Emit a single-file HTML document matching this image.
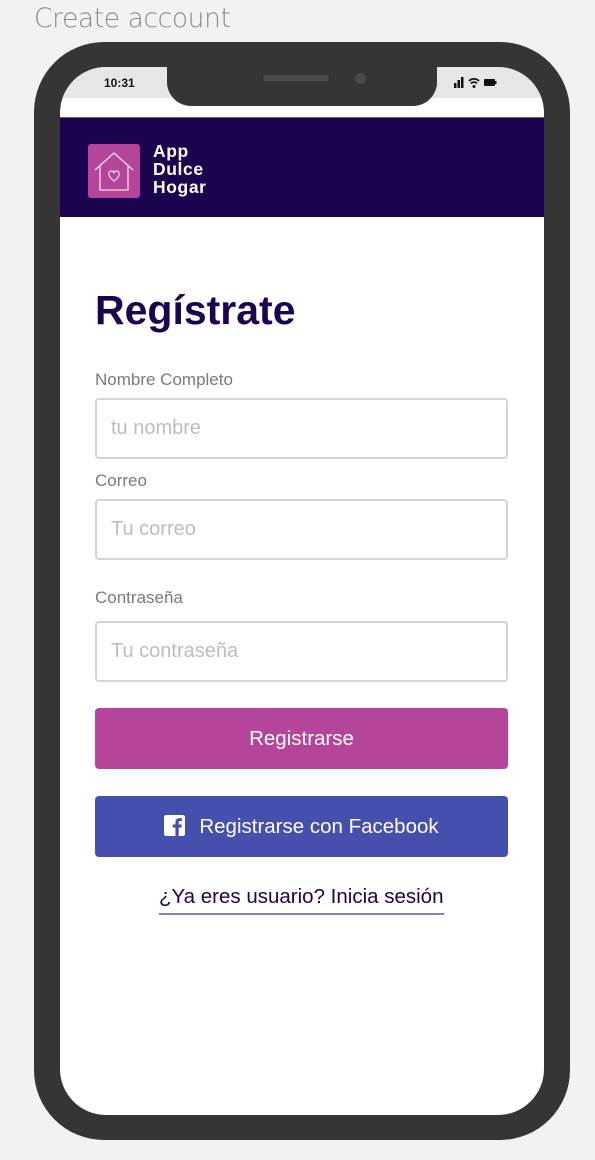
<!DOCTYPE html>
<html><head><meta charset="utf-8"><style>
*{margin:0;padding:0;box-sizing:border-box}
body{width:595px;height:1160px;background:#f2f2f2;position:relative;overflow:hidden;font-family:"Liberation Sans",Arial,sans-serif}
.t{position:absolute;left:34px;top:3px;font-size:26.5px;color:#8a8a8a;font-family:"DejaVu Sans","Liberation Sans",sans-serif;font-weight:300;letter-spacing:-0.4px}
.phone{position:absolute;left:34px;top:42px;width:536px;height:1098px;background:#353535;border-radius:70px}
.screen{position:absolute;left:60px;top:67px;width:484px;height:1048px;background:#fff;border-radius:46px;overflow:hidden}
.status{position:absolute;left:0;top:0;width:484px;height:31px;background:#e6e6e6}
.notch{position:absolute;left:107px;top:0;width:270px;height:39px;background:#353535;border-radius:0 0 24px 24px}
.spk{position:absolute;left:96px;top:8px;width:66px;height:6px;border-radius:3px;background:#4a4a4a}
.cam{position:absolute;left:188px;top:6px;width:11px;height:11px;border-radius:50%;background:#4a4a4a}
.time{position:absolute;left:44px;top:9px;font-size:12px;font-weight:bold;color:#111}
.hdr{position:absolute;left:0;top:50px;width:484px;height:100px;background:#1c034f;border-top:1px solid #6a5a8a}
.logo{position:absolute;left:28px;top:26px;width:52px;height:54px;background:#b5449b;border-radius:3px}
.lt{position:absolute;left:93px;top:24px;color:#fff;font-weight:bold;font-size:17.5px;line-height:18px;letter-spacing:0.6px}
h1{position:absolute;left:35px;top:220px;font-size:41px;color:#1c034f;font-weight:bold}
.lab{position:absolute;left:35px;font-size:17px;color:#7a7a7a}
.in{position:absolute;left:35px;width:413px;height:61px;border:2px solid #d3d3d3;border-radius:4px;font-size:20px;color:#bdbdbd;padding:17px 0 0 14px}
.btn{position:absolute;left:35px;width:413px;height:61px;border-radius:4px;color:#fff;font-size:20.5px;text-align:center;line-height:61px}
.link{position:absolute;left:99px;top:818px;font-size:20.5px;color:#1c034f;border-bottom:2px solid #8e7fb0;padding-bottom:4px}
</style></head><body>
<div class="t">Create account</div>
<div class="phone"></div>
<div class="screen">
<div class="status"></div>
<div class="time">10:31</div>
<svg style="position:absolute;left:394px;top:9px" width="44" height="13" viewBox="0 0 44 13"><rect x="0" y="7" width="2.5" height="5" fill="#111"/><rect x="3.5" y="4" width="2.5" height="8" fill="#111"/><rect x="7" y="1" width="2.5" height="11" fill="#111"/><path d="M15 5a7 7 0 0 1 10 0M17 7.5a4 4 0 0 1 6 0" stroke="#111" stroke-width="1.8" fill="none"/><circle cx="20" cy="10.5" r="1.5" fill="#111"/><rect x="30" y="3" width="11" height="7" rx="1" fill="#111"/><rect x="41" y="5" width="1.5" height="3" fill="#111"/></svg>
<div class="notch"><div class="spk"></div><div class="cam"></div></div>
<div class="hdr">
<div class="logo"><svg width="52" height="54" viewBox="0 0 52 54"><path d="M7 26 L26 9 L45 26 M12 22 V46 H40 V22" stroke="#f3dcee" stroke-width="1.3" fill="none"/><path d="M26 37 C19 32 20 27 23.5 27 C25 27 26 28 26 29.5 C26 28 27 27 28.5 27 C32 27 33 32 26 37Z" stroke="#f3dcee" stroke-width="1.2" fill="none"/></svg></div>
<div class="lt">App<br>Dulce<br>Hogar</div>
</div>
<h1>Regístrate</h1>
<div class="lab" style="top:303px">Nombre Completo</div>
<div class="in" style="top:331px">tu nombre</div>
<div class="lab" style="top:404px">Correo</div>
<div class="in" style="top:432px">Tu correo</div>
<div class="lab" style="top:521px">Contraseña</div>
<div class="in" style="top:554px">Tu contraseña</div>
<div class="btn" style="top:641px;background:#b5449b">Registrarse</div>
<div class="btn" style="top:729px;background:#454fae"><svg width="21" height="21" viewBox="0 0 20 20" style="vertical-align:-3px;margin-right:14px"><rect width="20" height="20" rx="2" fill="#fff"/><path d="M14 20V12h2.6l.4-3H14V7.3c0-.9.3-1.5 1.6-1.5H17V3.1c-.3 0-1.2-.1-2.3-.1-2.3 0-3.8 1.4-3.8 3.9V9H8.3v3h2.6v8z" fill="#454fae"/></svg>Registrarse con Facebook</div>
<div class="link">¿Ya eres usuario? Inicia sesión</div>
</div>
</body></html>
